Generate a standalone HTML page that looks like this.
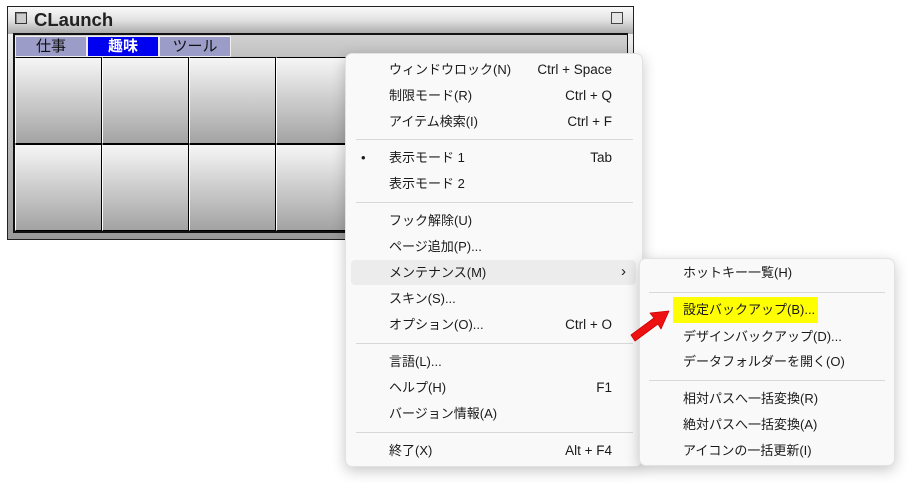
<!DOCTYPE html>
<html><head><meta charset="utf-8"><style>
*{margin:0;padding:0;box-sizing:border-box}
body{width:917px;height:483px;background:#fff;position:relative;overflow:hidden;font-family:"Liberation Sans","Noto Sans CJK JP",sans-serif}
.abs{position:absolute}
.win{left:7px;top:6px;width:627px;height:234px;border:1px solid #222;background:linear-gradient(#fff,#c8c8c8 40%,#9a9a9a)}
.title{left:8px;top:7px;width:625px;height:27px;background:linear-gradient(#fafafa,#e0e0e0 50%,#a8a8a8);}
.inner{left:13px;top:33px;width:615px;height:200px;border:2px solid #111;border-right:1px solid #111;background:linear-gradient(#d0d0d0,#808080 60%,#c0c0c0)}
.tab{top:36px;height:21px;background:#9c9cc8;font-size:15px;text-align:center;line-height:20px;color:#111;border:1px solid #eee}
.cell{width:87px;height:87px;border:1px solid #000;border-left:1px solid #fff;background:linear-gradient(#f6f6f6,#a3a3a3)}
.menu{background:#f9f9f9;border:1px solid #e2e2e2;border-radius:7px;box-shadow:0 4px 14px rgba(0,0,0,.22)}
.it{position:absolute;font-size:13px;color:#1a1a1a;line-height:18px;font-family:"Liberation Sans","Noto Sans CJK JP",sans-serif}
.sc{position:absolute;font-size:13.5px;color:#1a1a1a;line-height:18px;text-align:right;width:120px}
.sep{position:absolute;height:1px;background:#d8d8d8}
</style></head><body>
<div class="abs win"></div>
<div class="abs title"></div>
<div class="abs" style="left:15px;top:12px;width:12px;height:12px;border:1px solid #333;background:#ccc;box-shadow:inset 1px 1px 0 #888"></div>
<div class="abs" style="left:34px;top:9px;font-size:18.5px;font-weight:bold;color:#222;line-height:22px">CLaunch</div>
<div class="abs" style="left:611px;top:12px;width:12px;height:12px;border:1px solid #444;background:#e4e4e4"></div>
<div class="abs inner"></div>
<div class="abs tab" style="left:15px;width:72px">仕事</div>
<div class="abs tab" style="left:87px;width:72px;background:#0000f0;color:#fff;font-weight:bold">趣味</div>
<div class="abs tab" style="left:159px;width:72px">ツール</div>
<div class="abs" style="left:15px;top:57px;width:612px;height:174px;background:#000"></div>
<div class="abs cell" style="left:15px;top:57px"></div>
<div class="abs cell" style="left:102px;top:57px"></div>
<div class="abs cell" style="left:189px;top:57px"></div>
<div class="abs cell" style="left:276px;top:57px"></div>
<div class="abs cell" style="left:363px;top:57px"></div>
<div class="abs cell" style="left:15px;top:144px"></div>
<div class="abs cell" style="left:102px;top:144px"></div>
<div class="abs cell" style="left:189px;top:144px"></div>
<div class="abs cell" style="left:276px;top:144px"></div>
<div class="abs cell" style="left:363px;top:144px"></div>

<div class="abs menu" style="left:345px;top:53px;width:298px;height:414px"></div>
<div class="abs" style="left:351px;top:260px;width:285px;height:25px;background:#ececec;border-radius:4px"></div>
<div class="it" style="left:389px;top:61px">ウィンドウロック(N)</div><div class="sc" style="left:492px;top:61px">Ctrl + Space</div>
<div class="it" style="left:389px;top:87px">制限モード(R)</div><div class="sc" style="left:492px;top:87px">Ctrl + Q</div>
<div class="it" style="left:389px;top:113px">アイテム検索(I)</div><div class="sc" style="left:492px;top:113px">Ctrl + F</div>
<div class="sep" style="left:356px;top:139px;width:277px"></div>
<div class="it" style="left:361px;top:149px">•</div>
<div class="it" style="left:389px;top:149px">表示モード 1</div><div class="sc" style="left:492px;top:149px">Tab</div>
<div class="it" style="left:389px;top:175px">表示モード 2</div>
<div class="sep" style="left:356px;top:202px;width:277px"></div>
<div class="it" style="left:389px;top:212px">フック解除(U)</div>
<div class="it" style="left:389px;top:238px">ページ追加(P)...</div>
<div class="it" style="left:389px;top:264px">メンテナンス(M)</div><div class="sc" style="left:506px;top:263px;font-size:15px">›</div>
<div class="it" style="left:389px;top:290px">スキン(S)...</div>
<div class="it" style="left:389px;top:316px">オプション(O)...</div><div class="sc" style="left:492px;top:316px">Ctrl + O</div>
<div class="sep" style="left:356px;top:343px;width:277px"></div>
<div class="it" style="left:389px;top:353px">言語(L)...</div>
<div class="it" style="left:389px;top:379px">ヘルプ(H)</div><div class="sc" style="left:492px;top:379px">F1</div>
<div class="it" style="left:389px;top:405px">バージョン情報(A)</div>
<div class="sep" style="left:356px;top:432px;width:277px"></div>
<div class="it" style="left:389px;top:442px">終了(X)</div><div class="sc" style="left:492px;top:442px">Alt + F4</div>

<div class="abs menu" style="left:639px;top:258px;width:256px;height:208px"></div>
<div class="abs" style="left:673px;top:297px;width:145px;height:26px;background:#ffff00"></div>
<div class="it" style="left:683px;top:264px">ホットキー一覧(H)</div>
<div class="sep" style="left:649px;top:292px;width:236px"></div>
<div class="it" style="left:683px;top:301px">設定バックアップ(B)...</div>
<div class="it" style="left:683px;top:328px">デザインバックアップ(D)...</div>
<div class="it" style="left:683px;top:353px">データフォルダーを開く(O)</div>
<div class="sep" style="left:649px;top:380px;width:236px"></div>
<div class="it" style="left:683px;top:390px">相対パスへ一括変換(R)</div>
<div class="it" style="left:683px;top:416px">絶対パスへ一括変換(A)</div>
<div class="it" style="left:683px;top:442px">アイコンの一括更新(I)</div>

<svg class="abs" style="left:0;top:0" width="917" height="483">
<polygon points="631,335 654,318 650,313 669,311 661,329 658,324 635,341" fill="#ee1111" stroke="#c00" stroke-width="0.8" stroke-linejoin="round"/>
</svg>
</body></html>
